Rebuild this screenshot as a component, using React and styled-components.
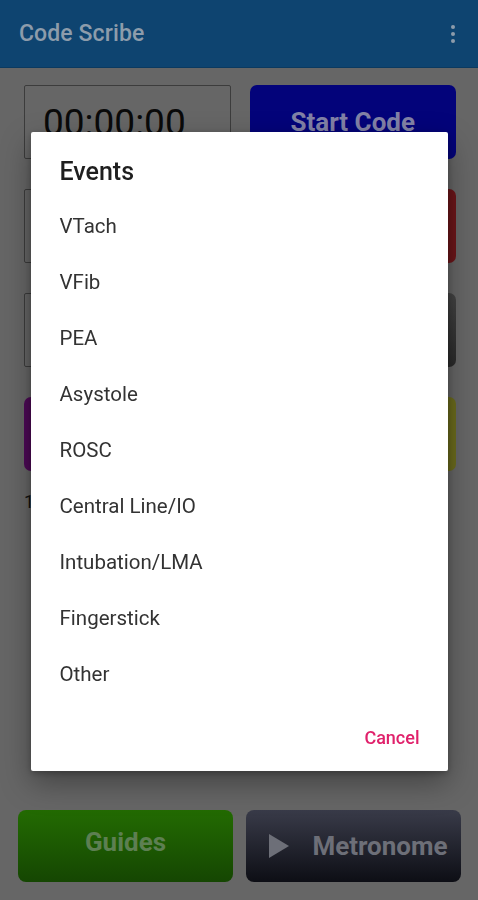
import React from 'react';
import styled, { createGlobalStyle } from 'styled-components';

const Global = createGlobalStyle`
  html, body { margin: 0; padding: 0; }
  body {
    background: #666666;
    font-family: Roboto, "Liberation Sans", sans-serif;
  }
`;

const Screen = styled.div`
  min-height: 100vh;
  display: flex;
  flex-direction: column;
  box-sizing: border-box;
  padding-bottom: 18px;
`;

const AppBar = styled.header`
  height: 67px;
  background: #0e4470;
  border-bottom: 1px solid #0b3a60;
  display: flex;
  align-items: center;
  justify-content: space-between;
  padding: 0 20px 0 19px;
`;

const Title = styled.div`
  color: #8d9cab;
  font-size: 23px;
  font-weight: 500;
  letter-spacing: 0.1px;
`;

const Kebab = styled.div`
  display: flex;
  flex-direction: column;
  gap: 3px;
  margin-right: 3px;
  span {
    width: 4px;
    height: 4px;
    border-radius: 50%;
    background: #8d9cab;
  }
`;

const Grid = styled.div`
  display: grid;
  grid-template-columns: 1fr 1fr;
  grid-auto-rows: 74px;
  column-gap: 19px;
  row-gap: 30px;
  padding: 17px 22px 0 24px;
`;

const Outlined = styled.div`
  border: 1px solid #3c3c3c;
  border-radius: 2px;
  display: flex;
  align-items: center;
  padding-left: 18px;
  font-size: 37px;
  color: #0a0a0a;
`;

const Tile = styled.div`
  border-radius: 7px;
  background: ${p => p.bg};
  display: flex;
  align-items: center;
  justify-content: center;
  color: ${p => p.fg || '#8a8a9c'};
  font-size: 26px;
  font-weight: 700;
`;

const Note = styled.div`
  padding: 20px 24px 0;
  font-size: 18px;
  color: #111;
`;

const Bottom = styled.div`
  margin-top: auto;
  display: grid;
  grid-template-columns: 1fr 1fr;
  gap: 13px;
  padding: 0 17px 0 18px;
`;

const BigButton = styled.div`
  height: 72px;
  box-sizing: border-box;
  padding-bottom: ${p => p.lift || 0}px;
  padding-left: ${p => p.shift || 0}px;
  border-radius: 8px;
  background: ${p => p.bg};
  display: flex;
  align-items: center;
  justify-content: center;
  gap: 23px;
  color: ${p => p.fg};
  font-size: 26px;
  font-weight: 700;
`;

const Scrim = styled.div`
  position: fixed;
  inset: 0;
  display: flex;
  align-items: center;
  justify-content: center;
  padding-top: 3px;
`;

const Dialog = styled.div`
  width: 417px;
  background: #ffffff;
  border-radius: 2px;
  box-shadow: 0 12px 30px rgba(0, 0, 0, 0.35), 0 2px 6px rgba(0, 0, 0, 0.25);
  box-sizing: border-box;
  padding: 26px 0 16px;
`;

const DialogTitle = styled.div`
  padding: 0 29px;
  font-size: 25px;
  line-height: 28px;
  font-weight: 500;
  color: #1f1f1f;
  margin-bottom: 12px;
`;

const Item = styled.div`
  height: 56px;
  display: flex;
  align-items: center;
  padding: 0 29px;
  font-size: 20.5px;
  color: #333333;
`;

const Actions = styled.div`
  display: flex;
  justify-content: flex-end;
  padding: 17px 20px 0;
`;

const TextButton = styled.div`
  height: 36px;
  display: flex;
  align-items: center;
  padding: 0 8px;
  color: #e0216b;
  font-size: 18px;
  font-weight: 500;
`;

const events = [
  'VTach',
  'VFib',
  'PEA',
  'Asystole',
  'ROSC',
  'Central Line/IO',
  'Intubation/LMA',
  'Fingerstick',
  'Other',
];

export default function App() {
  return (
    <>
      <Global />
      <Screen>
        <AppBar>
          <Title>Code Scribe</Title>
          <Kebab><span /><span /><span /></Kebab>
        </AppBar>
        <Grid>
          <Outlined>00:00:00</Outlined>
          <Tile bg="#03037a" fg="#8282a6">Start Code</Tile>
          <Outlined />
          <Tile bg="#6c1519" fg="#a07070">Shock</Tile>
          <Outlined />
          <Tile bg="linear-gradient(#444, #2a2a2a)" fg="#888">Meds</Tile>
          <Tile bg="#4d0956" fg="#a080a8">Pulse</Tile>
          <Tile bg="#6b6b1c" fg="#a0a070">Airway</Tile>
        </Grid>
        <Note>1 event logged</Note>
        <Bottom>
          <BigButton bg="linear-gradient(#236b02, #154602)" fg="#5d7f52" lift={8}>Guides</BigButton>
          <BigButton bg="linear-gradient(#393b49, #0d0e15)" fg="#6d6f78" shift={10}>
            <svg width="20" height="24" viewBox="0 0 20 24">
              <path d="M0 0 L20 12 L0 24 Z" fill="#6d6f78" />
            </svg>
            Metronome
          </BigButton>
        </Bottom>
      </Screen>
      <Scrim>
        <Dialog>
          <DialogTitle>Events</DialogTitle>
          {events.map(e => <Item key={e}>{e}</Item>)}
          <Actions>
            <TextButton>Cancel</TextButton>
          </Actions>
        </Dialog>
      </Scrim>
    </>
  );
}
